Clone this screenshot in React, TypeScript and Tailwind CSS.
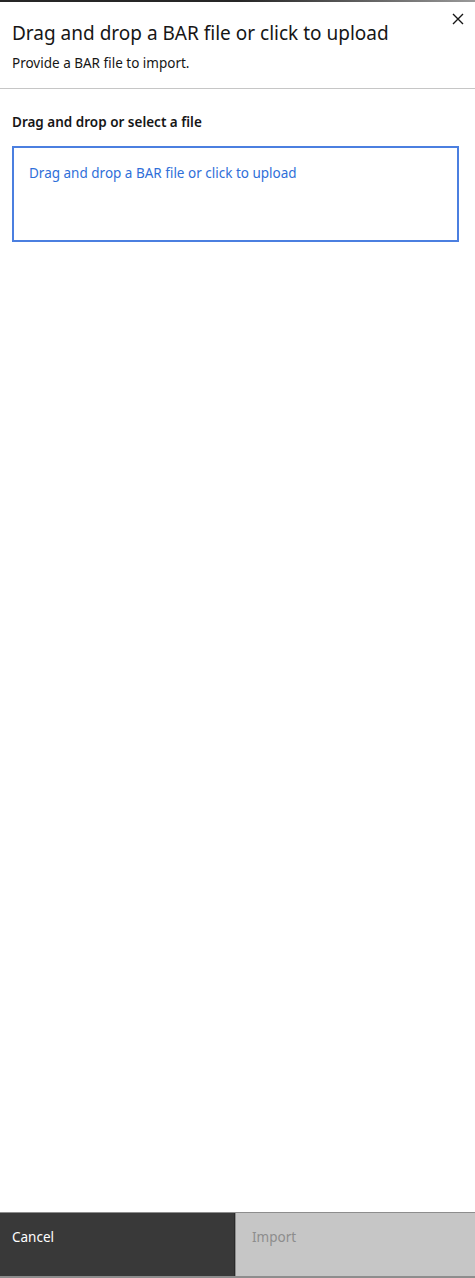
import React from "react";

export default function App() {
  return (
    <div
      className="w-[475px] h-[1278px] bg-white flex flex-col text-[#161616]"
      style={{ fontFamily: '"Noto Sans", "Open Sans", sans-serif' }}
    >
      <div className="h-[2px] w-full bg-gradient-to-r from-[#262626] via-[#262626] to-[#9a9a9a]" />
      <div className="relative px-3 pt-[17px] pb-[16px] border-b border-[#c6c6c6]">
        <h2 className="text-[19px] leading-[28px] font-normal text-[#161616]">
          Drag and drop a BAR file or click to upload
        </h2>
        <p className="mt-[7px] text-[13.5px] leading-[18px] text-[#161616]">
          Provide a BAR file to import.
        </p>
        <button className="absolute right-[9px] top-[9px] w-4 h-4 flex items-center justify-center">
          <svg width="12" height="12" viewBox="0 0 12 12" fill="none">
            <path d="M1 1L11 11M11 1L1 11" stroke="#161616" strokeWidth="1.4" />
          </svg>
        </button>
      </div>
      <div className="pl-3 pr-4 pt-[24px] flex-1">
        <div className="text-[13.5px] leading-[18px] font-semibold text-[#161616]">
          Drag and drop or select a file
        </div>
        <div className="mt-[15px] h-[96px] border-2 border-[#4b7fe0] px-[15px] pt-[12px]">
          <span className="text-[13.5px] leading-[18px] text-[#2f6fd9]">
            Drag and drop a BAR file or click to upload
          </span>
        </div>
      </div>
      <div className="flex h-[66px] border-t border-b-2 border-[#8d8d8d]">
        <button className="w-[235px] bg-[#393939] text-white text-[13.5px] text-left px-3 pt-[14px] self-stretch items-start flex border-r border-[#2a2a2a]">
          Cancel
        </button>
        <button className="flex-1 bg-[#c6c6c6] text-[#8d8d8d] text-[13.5px] text-left px-4 pt-[14px] flex items-start border-l border-[#8d8d8d]">
          Import
        </button>
      </div>
    </div>
  );
}
